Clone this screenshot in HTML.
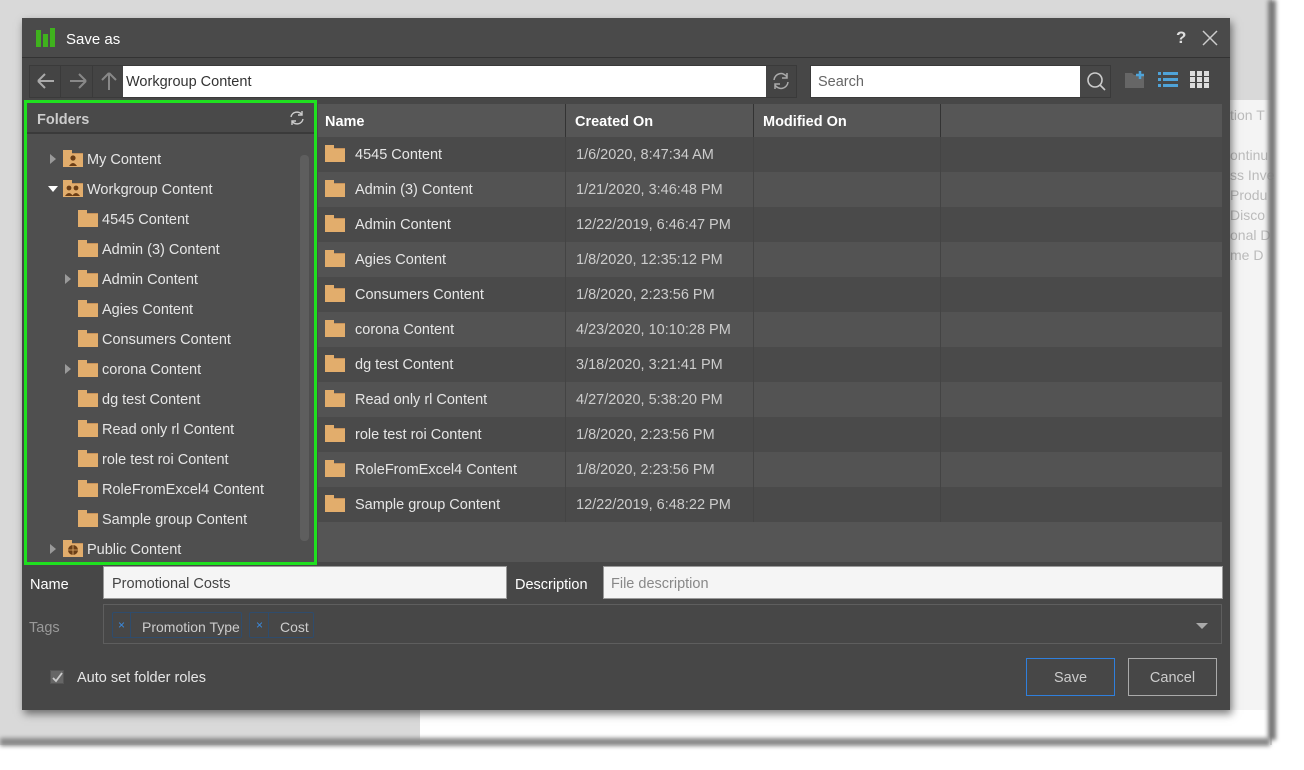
<!DOCTYPE html>
<html><head><meta charset="utf-8">
<style>
*{box-sizing:border-box;margin:0;padding:0}
body{width:1304px;height:770px;background:#fff;position:relative;overflow:hidden;font-family:"Liberation Sans",sans-serif;font-size:14.5px;color:#e6e6e6}
.a{position:absolute}
.f{position:absolute;width:20px;height:14px;background:#e2ad6c;border-top:1px solid #c7925a}
.f:before{content:"";position:absolute;left:0;top:-4px;width:9px;height:4px;background:#e2ad6c}
.tri{position:absolute;width:0;height:0;border-top:5px solid transparent;border-bottom:5px solid transparent;border-left:6px solid #9a9a9a}
.tri.d{border-left:5px solid transparent;border-right:5px solid transparent;border-top:6px solid #fff;border-bottom:0}
.row{position:absolute;left:318px;width:904px;height:35px}
.row span{position:absolute;top:10px}
.tr{position:absolute;height:30px;line-height:32px;color:#e6e6e6}
</style></head><body>
<div class="a" style="left:0;top:0;width:1272px;height:745px;background:#d9d9d9"></div>
<div class="a" style="left:420px;top:710px;width:850px;height:35px;background:#fff"></div>
<div class="a" style="left:1228px;top:100px;width:44px;height:610px;background:#f4f4f4"></div>
<div class="a" style="left:1230px;top:105px;color:#bbb;font-size:14px;line-height:20px">tion T<br><br>ontinu<br>ss Inve<br>Produ<br>Disco<br>onal D<br>me D</div>
<div class="a" style="left:0;top:745px;width:1304px;height:25px;background:#fff"></div>
<div class="a" style="left:0;top:738px;width:1270px;height:8px;background:#888;filter:blur(2px)"></div>
<div class="a" style="left:1268px;top:0;width:8px;height:740px;background:#777;filter:blur(2px)"></div>
<div class="a" style="left:22px;top:18px;width:1208px;height:692px;background:#474747;box-shadow:2px 4px 8px rgba(0,0,0,.5)"></div>
<div class="a" style="left:22px;top:18px;width:1208px;height:40px;background:#4a4a4a;border-bottom:1px solid #333"></div>
<div class="a" style="left:36px;top:30px;width:5px;height:17px;background:#3fb21d"></div>
<div class="a" style="left:43px;top:34px;width:5px;height:13px;background:#3fb21d"></div>
<div class="a" style="left:50px;top:28px;width:5px;height:19px;background:#3fb21d"></div>
<div class="a" style="left:66px;top:31px;font-size:15px;color:#fff">Save as</div>
<div class="a" style="left:1176px;top:28px;font-size:17px;color:#ddd;font-weight:bold">?</div>
<svg class="a" style="left:1201px;top:29px" width="18" height="18"><path d="M2 2L16 16M16 2L2 16" stroke="#ccc" stroke-width="1.5"/></svg>
<div class="a" style="left:29px;top:65px;width:768px;height:33px;border:1px solid #3a3a3a;background:#444"></div>
<div class="a" style="left:60px;top:66px;width:1px;height:31px;background:#3a3a3a"></div>
<div class="a" style="left:92px;top:66px;width:1px;height:31px;background:#3a3a3a"></div>
<svg class="a" style="left:34px;top:71px" width="90" height="20"><path d="M4 10H20M4 10L11 3M4 10L11 17" stroke="#aaa" stroke-width="2" fill="none"/><path d="M52 10H36M52 10L45 3M52 10L45 17" stroke="#888" stroke-width="2" fill="none"/><path d="M75 2V19M75 2L68 9M75 2L82 9" stroke="#888" stroke-width="2" fill="none"/></svg>
<div class="a" style="left:123px;top:66px;width:643px;height:31px;background:#fff;color:#333;padding:8px 3px">Workgroup Content</div>
<svg class="a" style="left:770px;top:70px" width="22" height="22"><path d="M4 10A7 7 0 0 1 17 7M18 12A7 7 0 0 1 5 15" stroke="#aaa" stroke-width="1.5" fill="none"/><path d="M17 3V8H12M5 19V14H10" stroke="#aaa" stroke-width="1.5" fill="none"/></svg>
<div class="a" style="left:810px;top:65px;width:301px;height:33px;border:1px solid #3a3a3a"></div>
<div class="a" style="left:811px;top:66px;width:269px;height:31px;background:#fff;color:#666;padding:8px 7px">Search</div>
<svg class="a" style="left:1085px;top:71px" width="22" height="22"><circle cx="10" cy="9" r="7" stroke="#ccc" stroke-width="1.6" fill="none"/><path d="M15 14L20 19" stroke="#ccc" stroke-width="1.6"/></svg>
<svg class="a" style="left:1124px;top:70px" width="24" height="20"><path d="M1 3H8L10 5H20V18H1Z" fill="#666"/><path d="M16 1V9M12 5H20" stroke="#4fa3d8" stroke-width="2.5"/></svg>
<svg class="a" style="left:1158px;top:71px" width="20" height="18"><g fill="#4fa3d8"><rect x="0" y="1" width="3" height="3"/><rect x="5" y="1" width="15" height="3"/><rect x="0" y="7" width="3" height="3"/><rect x="5" y="7" width="15" height="3"/><rect x="0" y="13" width="3" height="3"/><rect x="5" y="13" width="15" height="3"/></g></svg>
<svg class="a" style="left:1190px;top:71px" width="20" height="18"><g fill="#ddd"><rect x="0" y="0" width="5" height="5"/><rect x="7" y="0" width="5" height="5"/><rect x="14" y="0" width="5" height="5"/><rect x="0" y="6" width="5" height="5"/><rect x="7" y="6" width="5" height="5"/><rect x="14" y="6" width="5" height="5"/><rect x="0" y="12" width="5" height="5"/><rect x="7" y="12" width="5" height="5"/><rect x="14" y="12" width="5" height="5"/></g></svg>
<div class="a" style="left:24px;top:100px;width:293px;height:465px;background:#4f4f4f;border:3px solid #1fe01f"></div>
<div class="a" style="left:27px;top:103px;width:287px;height:31px;background:#494949;border-bottom:2px solid #3a3a3a"></div>
<div class="a" style="left:37px;top:112px;color:#ccc;font-weight:bold;font-size:14.5px">Folders</div>
<svg class="a" style="left:288px;top:109px" width="18" height="18"><path d="M3 8A6 6 0 0 1 14 6M15 10A6 6 0 0 1 4 12" stroke="#ccc" stroke-width="1.4" fill="none"/><path d="M14 2V6H10M4 16V12H8" stroke="#ccc" stroke-width="1.4" fill="none"/></svg>
<div class="a" style="left:300px;top:155px;width:9px;height:386px;background:#5e5e5e;border-radius:4px"></div>
<div class="tri" style="left:50px;top:154px"></div>
<div class="f" style="left:63px;top:153px"></div><svg class="a" style="left:67px;top:154px" width="12" height="12"><circle cx="6" cy="4" r="2.6" fill="#6b3e16"/><path d="M2 12Q6 6 10 12Z" fill="#6b3e16"/></svg>
<div class="tr" style="left:87px;top:144px">My Content</div>
<div class="tri d" style="left:48px;top:186px"></div>
<div class="f" style="left:63px;top:183px"></div><svg class="a" style="left:64px;top:184px" width="18" height="12"><circle cx="5" cy="4" r="2.4" fill="#6b3e16"/><circle cx="12" cy="4" r="2.4" fill="#6b3e16"/><path d="M1 12Q5 6 9 12ZM8 12Q12 6 16 12Z" fill="#6b3e16"/></svg>
<div class="tr" style="left:87px;top:174px">Workgroup Content</div>
<div class="f" style="left:78px;top:213px"></div><div class="tr" style="left:102px;top:204px">4545 Content</div>
<div class="f" style="left:78px;top:243px"></div><div class="tr" style="left:102px;top:234px">Admin (3) Content</div>
<div class="tri" style="left:65px;top:274px"></div>
<div class="f" style="left:78px;top:273px"></div><div class="tr" style="left:102px;top:264px">Admin Content</div>
<div class="f" style="left:78px;top:303px"></div><div class="tr" style="left:102px;top:294px">Agies Content</div>
<div class="f" style="left:78px;top:333px"></div><div class="tr" style="left:102px;top:324px">Consumers Content</div>
<div class="tri" style="left:65px;top:364px"></div>
<div class="f" style="left:78px;top:363px"></div><div class="tr" style="left:102px;top:354px">corona Content</div>
<div class="f" style="left:78px;top:393px"></div><div class="tr" style="left:102px;top:384px">dg test Content</div>
<div class="f" style="left:78px;top:423px"></div><div class="tr" style="left:102px;top:414px">Read only rl Content</div>
<div class="f" style="left:78px;top:453px"></div><div class="tr" style="left:102px;top:444px">role test roi Content</div>
<div class="f" style="left:78px;top:483px"></div><div class="tr" style="left:102px;top:474px">RoleFromExcel4 Content</div>
<div class="f" style="left:78px;top:513px"></div><div class="tr" style="left:102px;top:504px">Sample group Content</div>
<div class="tri" style="left:50px;top:544px"></div>
<div class="f" style="left:63px;top:543px"></div><svg class="a" style="left:67px;top:544px" width="12" height="12"><circle cx="6" cy="6" r="5" fill="#6b3e16"/><path d="M1 6H11M6 1V11" stroke="#e2ad6c" stroke-width=".8"/></svg>
<div class="tr" style="left:87px;top:534px">Public Content</div>
<div class="a" style="left:318px;top:104px;width:904px;height:458px;background:#555"></div>
<div class="a" style="left:318px;top:104px;width:904px;height:33px;background:#565656"></div>
<div class="a" style="left:565px;top:104px;width:1px;height:33px;background:#333"></div>
<div class="a" style="left:753px;top:104px;width:1px;height:33px;background:#333"></div>
<div class="a" style="left:940px;top:104px;width:1px;height:33px;background:#333"></div>
<div class="a" style="left:325px;top:114px;font-weight:bold;color:#fff">Name</div>
<div class="a" style="left:575px;top:114px;font-weight:bold;color:#fff">Created On</div>
<div class="a" style="left:763px;top:114px;font-weight:bold;color:#fff">Modified On</div>
<div class="row" style="top:137px;background:#4a4a4a"><div class="f" style="left:7px;top:11px"></div><span style="left:37px">4545 Content</span><span style="left:258px;color:#ccc">1/6/2020, 8:47:34 AM</span></div>
<div class="row" style="top:172px;background:#535353"><div class="f" style="left:7px;top:11px"></div><span style="left:37px">Admin (3) Content</span><span style="left:258px;color:#ccc">1/21/2020, 3:46:48 PM</span></div>
<div class="row" style="top:207px;background:#4a4a4a"><div class="f" style="left:7px;top:11px"></div><span style="left:37px">Admin Content</span><span style="left:258px;color:#ccc">12/22/2019, 6:46:47 PM</span></div>
<div class="row" style="top:242px;background:#535353"><div class="f" style="left:7px;top:11px"></div><span style="left:37px">Agies Content</span><span style="left:258px;color:#ccc">1/8/2020, 12:35:12 PM</span></div>
<div class="row" style="top:277px;background:#4a4a4a"><div class="f" style="left:7px;top:11px"></div><span style="left:37px">Consumers Content</span><span style="left:258px;color:#ccc">1/8/2020, 2:23:56 PM</span></div>
<div class="row" style="top:312px;background:#535353"><div class="f" style="left:7px;top:11px"></div><span style="left:37px">corona Content</span><span style="left:258px;color:#ccc">4/23/2020, 10:10:28 PM</span></div>
<div class="row" style="top:347px;background:#4a4a4a"><div class="f" style="left:7px;top:11px"></div><span style="left:37px">dg test Content</span><span style="left:258px;color:#ccc">3/18/2020, 3:21:41 PM</span></div>
<div class="row" style="top:382px;background:#535353"><div class="f" style="left:7px;top:11px"></div><span style="left:37px">Read only rl Content</span><span style="left:258px;color:#ccc">4/27/2020, 5:38:20 PM</span></div>
<div class="row" style="top:417px;background:#4a4a4a"><div class="f" style="left:7px;top:11px"></div><span style="left:37px">role test roi Content</span><span style="left:258px;color:#ccc">1/8/2020, 2:23:56 PM</span></div>
<div class="row" style="top:452px;background:#535353"><div class="f" style="left:7px;top:11px"></div><span style="left:37px">RoleFromExcel4 Content</span><span style="left:258px;color:#ccc">1/8/2020, 2:23:56 PM</span></div>
<div class="row" style="top:487px;background:#4a4a4a"><div class="f" style="left:7px;top:11px"></div><span style="left:37px">Sample group Content</span><span style="left:258px;color:#ccc">12/22/2019, 6:48:22 PM</span></div>
<div class="a" style="left:565px;top:137px;width:1px;height:385px;background:#444"></div>
<div class="a" style="left:753px;top:137px;width:1px;height:385px;background:#444"></div>
<div class="a" style="left:940px;top:137px;width:1px;height:385px;background:#444"></div>
<div class="a" style="left:30px;top:577px;color:#fff">Name</div>
<div class="a" style="left:103px;top:566px;width:404px;height:33px;background:#f5f5f5;border:1px solid #999;color:#444;padding:9px 8px">Promotional Costs</div>
<div class="a" style="left:515px;top:577px;color:#fff">Description</div>
<div class="a" style="left:603px;top:566px;width:620px;height:33px;background:#f5f5f5;border:1px solid #999;color:#888;padding:9px 7px">File description</div>
<div class="a" style="left:29px;top:620px;color:#999">Tags</div>
<div class="a" style="left:103px;top:604px;width:1119px;height:40px;border:1px solid #5e5e5e"></div>
<div class="a" style="left:112px;top:612px;width:130px;height:26px;border:1px solid #2f4c6c;border-radius:2px"></div>
<div class="a" style="left:130px;top:613px;width:1px;height:24px;background:#2f4c6c"></div>
<div class="a" style="left:118px;top:618px;color:#3b8be0;font-size:12px">×</div>
<div class="a" style="left:142px;top:619px;color:#ccc;font-size:14px">Promotion Type</div>
<div class="a" style="left:249px;top:612px;width:65px;height:26px;border:1px solid #2f4c6c;border-radius:2px"></div>
<div class="a" style="left:268px;top:613px;width:1px;height:24px;background:#2f4c6c"></div>
<div class="a" style="left:256px;top:618px;color:#3b8be0;font-size:12px">×</div>
<div class="a" style="left:280px;top:619px;color:#ccc;font-size:14px">Cost</div>
<div class="a" style="left:1196px;top:623px;border-left:6px solid transparent;border-right:6px solid transparent;border-top:6px solid #aaa"></div>
<div class="a" style="left:50px;top:670px;width:14px;height:14px;background:#666;border:1px solid #555"></div>
<svg class="a" style="left:51px;top:671px" width="13" height="13"><path d="M2 7L5 10L11 2" stroke="#ccc" stroke-width="1.8" fill="none"/></svg>
<div class="a" style="left:77px;top:670px;color:#e6e6e6">Auto set folder roles</div>
<div class="a" style="left:1026px;top:658px;width:89px;height:38px;border:1px solid #2f7fdc;color:#ccc;text-align:center;line-height:39px">Save</div>
<div class="a" style="left:1128px;top:658px;width:89px;height:38px;border:1px solid #aaa;color:#ccc;text-align:center;line-height:39px">Cancel</div>
</body></html>
